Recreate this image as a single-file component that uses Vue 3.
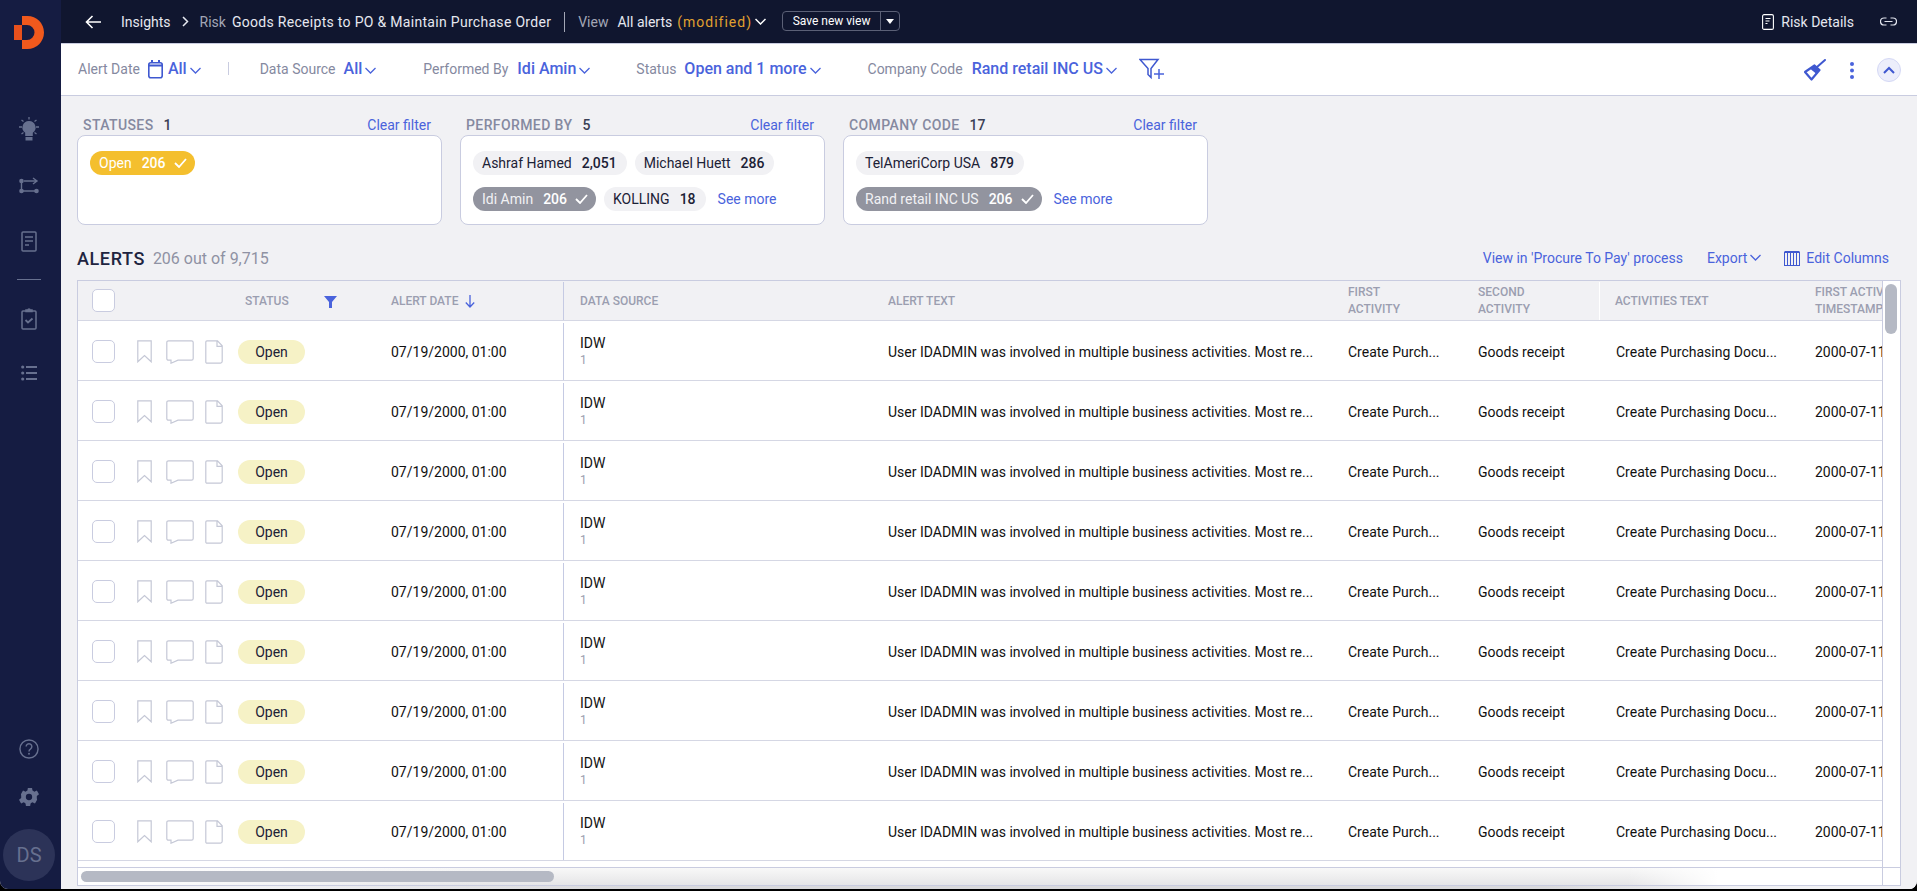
<script setup>
const rows = Array.from({ length: 9 }, (_, i) => i)
</script>

<template>
  <div class="app">
    <aside class="side">
      <svg class="logo" width="30" height="33" viewBox="0 0 30 33">
        <path d="M0 9h8v15H0z" fill="#e8501c" />
        <path d="M8 0h5.500a16.500 16.500 0 0 1 0 33H8v-9h5a7.500 7.500 0 0 0 0-15H8z" fill="#f0591d" />
      </svg>
      <div class="side-top">
        <svg width="24" height="24" viewBox="0 0 24 24" fill="none" stroke="#67708f" stroke-width="1.300">
          <path d="M12 0v2.500M2 10h3M19 10h3M4.500 3l2 1.500M19.500 3l-2 1.500M4.500 17l2-1.500M19.500 17l-2-1.500" />
          <path d="M12 4a6.500 6.500 0 0 0-3.800 11.800V19h7.600v-3.200A6.500 6.500 0 0 0 12 4z" fill="#67708f" stroke="none" />
          <path d="M8.500 20h7v3.500h-7z" fill="#67708f" stroke="none" />
        </svg>
        <svg width="20" height="18" viewBox="0 0 20 18" fill="none" stroke="#67708f" stroke-width="1.400">
          <circle cx="2.500" cy="4" r="2.300" fill="#67708f" stroke="none" />
          <circle cx="2.500" cy="14" r="2.300" fill="#67708f" stroke="none" />
          <circle cx="17.500" cy="14" r="2.300" fill="#67708f" stroke="none" />
          <path d="M2.500 4v10M2.500 14h15M5 4h12.500M14 1l4 3-4 3" />
        </svg>
        <svg width="16" height="21" viewBox="0 0 16 21" fill="none" stroke="#67708f" stroke-width="1.500">
          <rect x="1" y="1" width="14" height="19" rx="1" />
          <path d="M4 6h8M4 10h8M4 14h4" />
        </svg>
      </div>
      <div class="side-sep"></div>
      <div class="side-mid">
        <svg width="16" height="23" viewBox="0 0 16 23" fill="none" stroke="#67708f" stroke-width="1.500">
          <rect x="1" y="4" width="14" height="18" rx="1" />
          <path d="M5 4.500V3h2a1 1 0 0 1 2 0h2v1.500z" fill="#67708f" />
          <path d="M4.500 13l2.500 2.500 4.500-4" stroke-width="1.800" />
        </svg>
        <svg width="16" height="16" viewBox="0 0 16 16" fill="#67708f">
          <circle cx="1.700" cy="2" r="1.600" /><rect x="5" y="1" width="11" height="2" />
          <circle cx="1.700" cy="8" r="1.600" /><rect x="5" y="7" width="11" height="2" />
          <circle cx="1.700" cy="14" r="1.600" /><rect x="5" y="13" width="11" height="2" />
        </svg>
      </div>
      <div class="side-bottom">
        <svg class="help" width="20" height="20" viewBox="0 0 21 21" fill="none" stroke="#67708f" stroke-width="1.500">
          <circle cx="10.500" cy="10.500" r="9.500" />
          <path d="M7.500 8a3 3 0 1 1 4.500 2.600c-1 .6-1.500 1.100-1.500 2.400" />
          <circle cx="10.500" cy="15.500" r="1" fill="#67708f" stroke="none" />
        </svg>
        <svg class="gear" width="20" height="20" viewBox="2.500 2.500 19 19">
          <path fill="#67708f" d="M19.400 13a7.600 7.600 0 0 0 0-2l2.100-1.600-2-3.500-2.500 1a7.600 7.600 0 0 0-1.700-1l-.4-2.400h-4l-.4 2.400a7.600 7.600 0 0 0-1.700 1l-2.500-1-2 3.500L4.600 11a7.600 7.600 0 0 0 0 2l-2.100 1.600 2 3.500 2.500-1c.5.400 1.100.7 1.700 1l.4 2.400h4l.4-2.400c.6-.3 1.200-.6 1.700-1l2.500 1 2-3.500zM12 15a3 3 0 1 1 0-6 3 3 0 0 1 0 6z" />
        </svg>
        <div class="avatar">DS</div>
      </div>
    </aside>

    <main class="main">
      <header class="top">
        <svg class="back" width="16" height="14" viewBox="0 0 16 14" fill="none" stroke="#fff" stroke-width="1.600">
          <path d="M16 7H1.500M7.500 1l-6 6 6 6" />
        </svg>
        <span class="t-ins">Insights</span>
        <svg class="t-gt" width="7" height="11" viewBox="0 0 7 11" fill="none" stroke="#e6e8f0" stroke-width="1.500"><path d="M1 1l4.500 4.500L1 10" /></svg>
        <span class="t-risk">Risk</span>
        <span class="t-name">Goods Receipts to PO &amp; Maintain Purchase Order</span>
        <span class="t-bar"></span>
        <span class="t-view">View</span>
        <span class="t-all">All alerts</span>
        <span class="t-mod">(modified)</span>
        <svg class="t-chev" width="11" height="7" viewBox="0 0 11 7" fill="none" stroke="#fff" stroke-width="1.500"><path d="M.5 1l5 5 5-5" /></svg>
        <div class="save">
          <span class="save-l">Save new view</span>
          <span class="save-r"><i></i></span>
        </div>
        <div class="top-right">
          <svg width="12" height="16" viewBox="0 0 12 16" fill="none" stroke="#fff" stroke-width="1.100">
            <rect x=".6" y=".6" width="10.800" height="14.800" rx="1.500" />
            <path d="M3.500 4.500h5M3.500 7h4M3.500 9.500h2" />
          </svg>
          <span class="rd">Risk Details</span>
          <svg class="link" width="17" height="9" viewBox="0 0 17 9" fill="none" stroke="#dfe2ec" stroke-width="1.200">
            <path d="M6.500 1H4a3.500 3.500 0 0 0 0 7h2.500M10.500 1H13a3.500 3.500 0 0 1 0 7h-2.500M4.500 4.500h8" />
          </svg>
        </div>
      </header>

      <section class="fbar">
        <span class="f-lab lab1">Alert Date</span>
        <svg class="cal" width="15" height="20" viewBox="0 0 15 20" fill="none" stroke="#3f58d0" stroke-width="1.600">
          <rect x=".8" y="3.800" width="13.400" height="15" rx="2" />
          <path d="M.8 6.500h13.400M4 1v3M11 1v3" stroke-width="2" />
        </svg>
        <span class="f-val v1">All</span>
        <svg class="chev" width="11" height="7" viewBox="0 0 11 7" fill="none" stroke="#4a63dc" stroke-width="1.300"><path d="M.5 1l5 5 5-5" /></svg>
        <span class="f-sep"></span>
        <span class="f-lab lab2">Data Source</span>
        <span class="f-val v2">All</span>
        <svg class="chev" width="11" height="7" viewBox="0 0 11 7" fill="none" stroke="#4a63dc" stroke-width="1.300"><path d="M.5 1l5 5 5-5" /></svg>
        <span class="f-lab lab3">Performed By</span>
        <span class="f-val v3">Idi Amin</span>
        <svg class="chev" width="11" height="7" viewBox="0 0 11 7" fill="none" stroke="#4a63dc" stroke-width="1.300"><path d="M.5 1l5 5 5-5" /></svg>
        <span class="f-lab lab4">Status</span>
        <span class="f-val v4">Open and 1 more</span>
        <svg class="chev" width="11" height="7" viewBox="0 0 11 7" fill="none" stroke="#4a63dc" stroke-width="1.300"><path d="M.5 1l5 5 5-5" /></svg>
        <span class="f-lab lab5">Company Code</span>
        <span class="f-val v5">Rand retail INC US</span>
        <svg class="chev" width="11" height="7" viewBox="0 0 11 7" fill="none" stroke="#4a63dc" stroke-width="1.300"><path d="M.5 1l5 5 5-5" /></svg>
        <svg class="fplus" width="26" height="22" viewBox="0 0 26 22" fill="none" stroke="#3f58d0" stroke-width="1.500">
          <path d="M1 1.500h18l-7 9v9l-3-3v-6z" />
          <path d="M15 16h10M20 11v10" stroke="#4a63dc" />
        </svg>
        <div class="f-right">
          <svg width="22" height="22" viewBox="0 0 22 22" fill="none" stroke="#3f58d0">
            <path d="M21 1l-8 7" stroke-width="2" stroke-linecap="round" />
            <path d="M1 13l9.500-6.500 5 4.500-8 9.500z" stroke-width="2.200" stroke-linejoin="round" />
            <path d="M9.500 6.500l6 4.500-3 4-6-5z" fill="#3f58d0" stroke="none" />
          </svg>
          <svg class="dots" width="6" height="18" viewBox="0 0 6 18" fill="#4a63dc">
            <circle cx="3" cy="3" r="2" /><circle cx="3" cy="9.500" r="2" /><circle cx="3" cy="16" r="2" />
          </svg>
          <span class="collapse">
            <svg width="12" height="8" viewBox="0 0 12 8" fill="none" stroke="#3f58d0" stroke-width="2"><path d="M1 7l5-5 5 5" /></svg>
          </span>
        </div>
      </section>

      <section class="panels">
        <div class="panel">
          <div class="p-head"><span class="p-t">STATUSES</span><b class="p-n">1</b><a class="clear">Clear filter</a></div>
          <div class="p-card">
            <div class="chips">
              <span class="chip on-y">Open <b>206</b>
                <svg width="13" height="10" viewBox="0 0 13 10" fill="none" stroke="#fff" stroke-width="1.800"><path d="M1 5l4 4 7-8" /></svg>
              </span>
            </div>
          </div>
        </div>
        <div class="panel">
          <div class="p-head"><span class="p-t">PERFORMED BY</span><b class="p-n">5</b><a class="clear">Clear filter</a></div>
          <div class="p-card">
            <div class="chips">
              <span class="chip">Ashraf Hamed <b>2,051</b></span>
              <span class="chip">Michael Huett <b>286</b></span>
            </div>
            <div class="chips">
              <span class="chip on-g">Idi Amin <b>206</b>
                <svg width="13" height="10" viewBox="0 0 13 10" fill="none" stroke="#fff" stroke-width="1.800"><path d="M1 5l4 4 7-8" /></svg>
              </span>
              <span class="chip">KOLLING <b>18</b></span>
              <a class="more">See more</a>
            </div>
          </div>
        </div>
        <div class="panel">
          <div class="p-head"><span class="p-t">COMPANY CODE</span><b class="p-n">17</b><a class="clear">Clear filter</a></div>
          <div class="p-card">
            <div class="chips">
              <span class="chip">TelAmeriCorp USA <b>879</b></span>
            </div>
            <div class="chips">
              <span class="chip on-g">Rand retail INC US <b>206</b>
                <svg width="13" height="10" viewBox="0 0 13 10" fill="none" stroke="#fff" stroke-width="1.800"><path d="M1 5l4 4 7-8" /></svg>
              </span>
              <a class="more">See more</a>
            </div>
          </div>
        </div>
      </section>

      <section class="ahead">
        <span class="a-t">ALERTS</span>
        <span class="a-c">206 out of 9,715</span>
        <div class="a-links">
          <a>View in 'Procure To Pay' process</a>
          <a class="exp">Export<svg width="11" height="7" viewBox="0 0 11 7" fill="none" stroke="#4a63dc" stroke-width="1.300"><path d="M.5 1l5 5 5-5" /></svg></a>
          <a class="cols">
            <svg width="16" height="15" viewBox="0 0 16 15" fill="none" stroke="#3f58d0" stroke-width="1">
              <rect x=".5" y="1.500" width="15" height="13" />
              <path d="M.5 1h15" stroke-width="2" />
              <path d="M3.500 2v12M6.500 2v12M9.500 2v12M12.500 2v12" />
            </svg>Edit Columns
          </a>
        </div>
      </section>

      <section class="tbl">
        <div class="tbl-top">
          <div class="tbl-main">
            <div class="tr th">
              <div class="c c1"><span class="box"></span></div>
              <div class="c c2"><span class="st">STATUS</span>
                <svg width="13" height="13" viewBox="0 0 13 13" fill="#4a63dc"><path d="M0 1h13L8 7v6H5V7z" /></svg>
              </div>
              <div class="c c3">ALERT DATE
                <svg class="arrow" width="10" height="13" viewBox="0 0 10 13" fill="none" stroke="#4a63dc" stroke-width="1.300"><path d="M5 0v12M.8 7.500L5 12l4.200-4.500" /></svg>
              </div>
              <div class="c c4">DATA SOURCE</div>
              <div class="c c5">ALERT TEXT</div>
              <div class="c c6">FIRST<br />ACTIVITY</div>
              <div class="c c7">SECOND<br />ACTIVITY</div>
              <div class="c c8">ACTIVITIES TEXT</div>
              <div class="c c9">FIRST ACTIVITY<br />TIMESTAMP</div>
            </div>
            <div v-for="r in rows" :key="r" class="tr td">
              <div class="c c1">
                <span class="box"></span>
                <svg class="ic-b" width="15" height="23" viewBox="0 0 15 23" fill="none" stroke="#c5c8d6" stroke-width="1.200">
                  <path d="M.8.800h13.400v21L7.500 15.500.8 21.800z" />
                </svg>
                <svg class="ic-c" width="28" height="24" viewBox="0 0 28 24" fill="none" stroke="#c5c8d6" stroke-width="1.200">
                  <path d="M2.500.8h23a1.700 1.700 0 0 1 1.700 1.700v16a1.700 1.700 0 0 1-1.700 1.700H12l-7 3v-3H2.500A1.700 1.700 0 0 1 .8 18.500v-16A1.700 1.700 0 0 1 2.500.8z" />
                </svg>
                <svg class="ic-d" width="18" height="24" viewBox="0 0 18 24" fill="none" stroke="#c5c8d6" stroke-width="1.200">
                  <path d="M2 .8h10.500l4.700 5v15.500a1.800 1.800 0 0 1-1.800 1.800H2a1.200 1.200 0 0 1-1.200-1.200V2A1.200 1.200 0 0 1 2 .8zM12 .8v5.500h5.200" />
                </svg>
              </div>
              <div class="c c2"><span class="pill">Open</span></div>
              <div class="c c3">07/19/2000, 01:00</div>
              <div class="c c4"><div class="ds"><span>IDW</span><small>1</small></div></div>
              <div class="c c5">User IDADMIN was involved in multiple business activities. Most re...</div>
              <div class="c c6">Create Purch...</div>
              <div class="c c7">Goods receipt</div>
              <div class="c c8">Create Purchasing Docu...</div>
              <div class="c c9">2000-07-11 10:32:00</div>
            </div>
            <div class="tail"></div>
          </div>
          <div class="vs"><i></i></div>
        </div>
        <div class="hs"><div class="hs-track"><i></i></div><div class="hs-corner"></div></div>
      </section>
    </main>
  </div>
</template>

<style>
html, body { margin: 0; background: #000; }
</style>

<style scoped>
* { box-sizing: border-box; }
.app { display: flex; width: 1917px; height: 889px; overflow: hidden; background: #f1f1f4; border-radius: 0 0 8px 8px; font-family: Roboto, "Liberation Sans", sans-serif; color: #14182c; font-size: 14px; }
a { color: #4a63dc; }

.side { width: 61px; flex: none; background: #151c42; display: flex; flex-direction: column; align-items: center; padding: 16px 3px 0 0; }
.side-top { display: flex; flex-direction: column; align-items: center; margin-top: 68px; gap: 36px; }
.side-sep { width: 24px; height: 1px; background: #67708f; margin: 27px 0; }
.side-mid { display: flex; flex-direction: column; align-items: center; gap: 35px; }
.side-bottom { margin-top: auto; display: flex; flex-direction: column; align-items: center; padding-bottom: 8px; }
.gear { margin-top: 28px; margin-bottom: 22px; }
.avatar { width: 52px; height: 52px; border-radius: 50%; background: #2c3358; color: #67708f; font-size: 20px; display: flex; align-items: center; justify-content: center; }

.main { flex: 1; min-width: 0; display: flex; flex-direction: column; background: linear-gradient(90deg, #f1f1f4 10%, #d9d9dc 30%, #d9d9dc 80%, #f1f1f4 90%) bottom / 100% 3px no-repeat, #f1f1f4; }
.top { height: 44px; flex: none; background: #10162f; border-bottom: 1px solid #c9cce0; display: flex; align-items: center; padding-left: 24px; color: #e6e8f0; }
.t-ins { margin-left: 20px; }
.t-gt { margin-left: 11px; }
.t-risk { margin-left: 11px; color: #a3a7b6; }
.t-name { letter-spacing: .3px; margin-left: 6px; }
.t-bar { width: 1px; height: 20px; background: #a3a7b6; margin-left: 13px; }
.t-view { margin-left: 13px; color: #a3a7b6; }
.t-all { margin-left: 9px; }
.t-mod { margin-left: 5px; color: #e2a12f; letter-spacing: 1px; }
.t-chev { margin-left: 3px; }
.save { margin-left: 16px; height: 20px; width: 118px; border: 1px solid #5b6076; border-radius: 4px; display: flex; font-size: 12px; color: #fff; margin-top: -1px; }
.save-l { flex: 1; display: flex; align-items: center; justify-content: center; border-right: 1px solid #5b6076; }
.save-r { width: 18px; display: flex; align-items: center; justify-content: center; }
.save-r i { border: 4.500px solid transparent; border-top: 5px solid #fff; border-bottom: 0; }
.top-right { margin-left: auto; display: flex; align-items: center; padding-right: 20px; }
.rd { margin-left: 7px; }
.link { margin-left: 26px; }

.fbar { height: 52px; flex: none; background: #fff; border-bottom: 1px solid #c9cce0; display: flex; align-items: center; padding: 0 0 2px 17px; }
.f-lab { color: #8589a0; }
.f-val { color: #4a63dc; font-size: 16px; font-weight: 500; }
.chev { margin-left: 3px; margin-top: 3px; }
.cal { margin-left: 8px; }
.v1 { margin-left: 5px; }
.f-sep { width: 1px; height: 13px; background: #c9cce0; margin-left: 27px; }
.lab2 { margin-left: 31px; }
.v2 { margin-left: 8px; }
.lab3 { margin-left: 47px; }
.v3 { margin-left: 9px; }
.lab4 { margin-left: 46px; }
.v4 { margin-left: 8px; }
.lab5 { margin-left: 47px; }
.v5 { margin-left: 9px; }
.fplus { margin-left: 22px; }
.f-right { margin-left: auto; padding-right: 16px; display: flex; align-items: center; margin-top: 2px; }
.dots { margin-left: 23px; }
.collapse { margin-left: 22px; width: 24px; height: 24px; border-radius: 50%; background: #eceefb; border: 1px solid #d4d8f5; display: flex; align-items: center; justify-content: center; }

.panels { display: flex; gap: 18px; padding: 19px 0 0 16px; flex: none; }
.panel { width: 365px; }
.p-head { display: flex; align-items: center; height: 19px; padding-left: 6px; color: #8589a0; font-weight: 500; font-size: 14px; }
.p-t { letter-spacing: .4px; }
.p-n { margin-left: 10px; color: #3a3f55; font-weight: 500; }
.clear { margin-left: auto; margin-right: 11px; font-weight: 400; font-size: 14px; }
.p-card { margin-top: 1px; height: 90px; background: #fff; border: 1px solid #c9cce0; border-radius: 8px; padding: 15px 12px 0; display: flex; flex-direction: column; gap: 12px; }
.chips { display: flex; align-items: center; gap: 8px; }
.chip { height: 24px; border-radius: 12px; background: #f1f1f4; padding: 0 10px 0 9px; display: inline-flex; align-items: center; white-space: nowrap; color: #1c2136; }
.chip b { margin-left: 10px; font-weight: 500; }
.chip svg { margin-left: 8px; }
.on-y, .on-g { padding-right: 8px; }
.on-y { background: #f4bf2e; color: #fff; }
.on-g { background: #92949f; color: #f1f1f4; }
.on-y b, .on-g b { color: #fff; }
.more { margin-left: 4px; }

.ahead { display: flex; align-items: center; height: 24px; margin-top: 21px; padding-left: 16px; padding-right: 28px; flex: none; }
.a-t { color: #1f2440; font-size: 18px; font-weight: 500; letter-spacing: .6px; }
.a-c { margin-left: 8px; color: #8f92a3; font-size: 16px; }
.a-links { margin-left: auto; display: flex; align-items: center; gap: 24px; }
.exp { margin-right: -1px; }
.exp svg { margin-left: 3px; vertical-align: 2px; }
.cols svg { margin-right: 6px; vertical-align: -3px; }

.tbl { margin: 10px 16px 0 16px; height: 606px; flex: none; border: 1px solid #c9cce0; display: flex; flex-direction: column; }
.tbl-top { flex: 1; min-height: 0; display: flex; }
.tbl-main { flex: 1; min-width: 0; overflow: hidden; background: #fff; }
.tr { display: flex; width: 1960px; }
.th { height: 40px; padding-top: 1px; background: #f1f1f4; color: #9b9eb0; font-size: 12px; font-weight: 500; line-height: 17px; border-bottom: 1px solid #d5d7e4; }
.th .c1 { margin-top: -1px; }
.td { height: 60px; padding-top: 2px; background: #fff; border-bottom: 1px solid #d5d7e4; color: #111; }
.c { display: flex; align-items: center; flex: none; white-space: nowrap; }
.c1 { width: 160px; padding-left: 14px; }
.c2 { width: 153px; }
.c3 { width: 173px; border-right: 1px solid #c5cae3; }
.c4 { width: 324px; padding-left: 16px; }
.c5 { width: 460px; }
.c6 { width: 130px; }
.c7 { width: 121px; }
.c8 { width: 216px; padding-left: 16px; border-left: 1px solid #fff; }
.c9 { width: 300px; }
.th .c8 { padding-left: 15px; }
.box { width: 23px; height: 23px; border: 1px solid #c9cce0; border-radius: 5px; background: #fff; flex: none; }
.ic-b { margin-left: 22px; }
.ic-c { margin-left: 14px; }
.ic-d { margin-left: 11px; }
.st { margin-left: 7px; margin-right: 35px; }
.arrow { margin-left: 7px; }
.pill { width: 67px; height: 24px; border-radius: 12px; background: #f6f2c6; display: flex; align-items: center; justify-content: center; color: #1c2136; font-size: 14px; }
.ds { display: flex; flex-direction: column; line-height: 17px; }
.ds small { font-size: 12px; color: #9b9eb0; line-height: 16px; }
.tail { height: 6px; background: #fff; }
.vs { width: 18px; flex: none; border-left: 1px solid #c9cce0; background: #fff; padding: 3px 3px 0 2px; }
.vs i { display: block; height: 50px; border-radius: 6px; background: #b5b9c4; }
.hs { height: 18px; flex: none; display: flex; border-top: 1px solid #c9cce0; background: linear-gradient(90deg, #fff 0, rgba(255,255,255,0) 22%, rgba(255,255,255,0) 85%, #fff 90%), linear-gradient(180deg, #f8f8f8, #e5e5e7); }
.hs-track { flex: 1; padding: 3px 3px; }
.hs-track i { display: block; width: 473px; height: 11px; border-radius: 6px; background: #b5b9c4; }
.hs-corner { width: 18px; border-left: 1px solid #c9cce0; }
</style>
